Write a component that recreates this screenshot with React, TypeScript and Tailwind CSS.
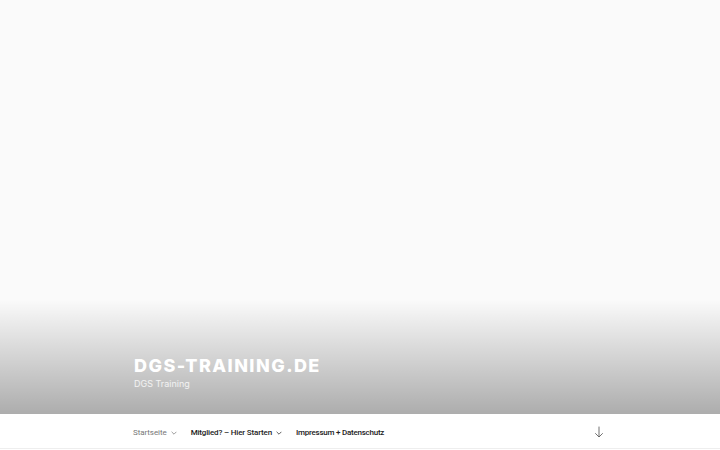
import React from "react";

function Chevron() {
  return (
    <svg viewBox="0 0 10 6" className="ml-[4px] h-[4px] w-[6px]" fill="none" stroke="currentColor" strokeWidth="1.2">
      <path d="M1 1l4 4 4-4" />
    </svg>
  );
}

function ArrowDown() {
  return (
    <svg viewBox="0 0 12 14" className="h-[12px] w-[10px]" fill="none" stroke="#555" strokeWidth="1">
      <path d="M6 0.5v12.5M1.5 8.5L6 13l4.5-4.5" />
    </svg>
  );
}

export default function App() {
  return (
    <div className="h-[450px] w-[720px] overflow-hidden bg-white" style={{ fontFamily: "Inter, 'Noto Sans', sans-serif" }}>
      <header className="relative flex h-[414px] flex-col justify-end bg-[#fafafa]">
        <div className="absolute inset-x-0 bottom-0 h-[114px] bg-[linear-gradient(to_bottom,rgba(0,0,0,0)_0%,rgba(0,0,0,0.31)_100%)]" />
        <div className="relative px-[134px] pb-[24px]">
          <h1 className="text-[18px] font-extrabold uppercase leading-[24px] tracking-[0.08em] text-white">
            DGS-Training.de
          </h1>
          <p className="mt-[-1px] text-[9px] leading-[13px] text-white/80">DGS Training</p>
        </div>
      </header>
      <nav
        className="flex h-[35px] items-center border-b border-[#eee] bg-white pl-[133px] pr-[116px] pt-[3px] text-[8px] font-medium text-[#222]"
        style={{ fontFamily: "Roboto, 'Noto Sans', sans-serif" }}
      >
        <span className="flex items-center font-normal tracking-[-0.01em] text-[#767676]">
          Startseite
          <Chevron />
        </span>
        <span className="ml-[14px] flex items-center tracking-[-0.02em]">
          Mitglied? – Hier Starten
          <Chevron />
        </span>
        <span className="ml-[14px] tracking-[-0.03em]">Impressum + Datenschutz</span>
        <span className="ml-auto -mt-[2px]">
          <ArrowDown />
        </span>
      </nav>
    </div>
  );
}
